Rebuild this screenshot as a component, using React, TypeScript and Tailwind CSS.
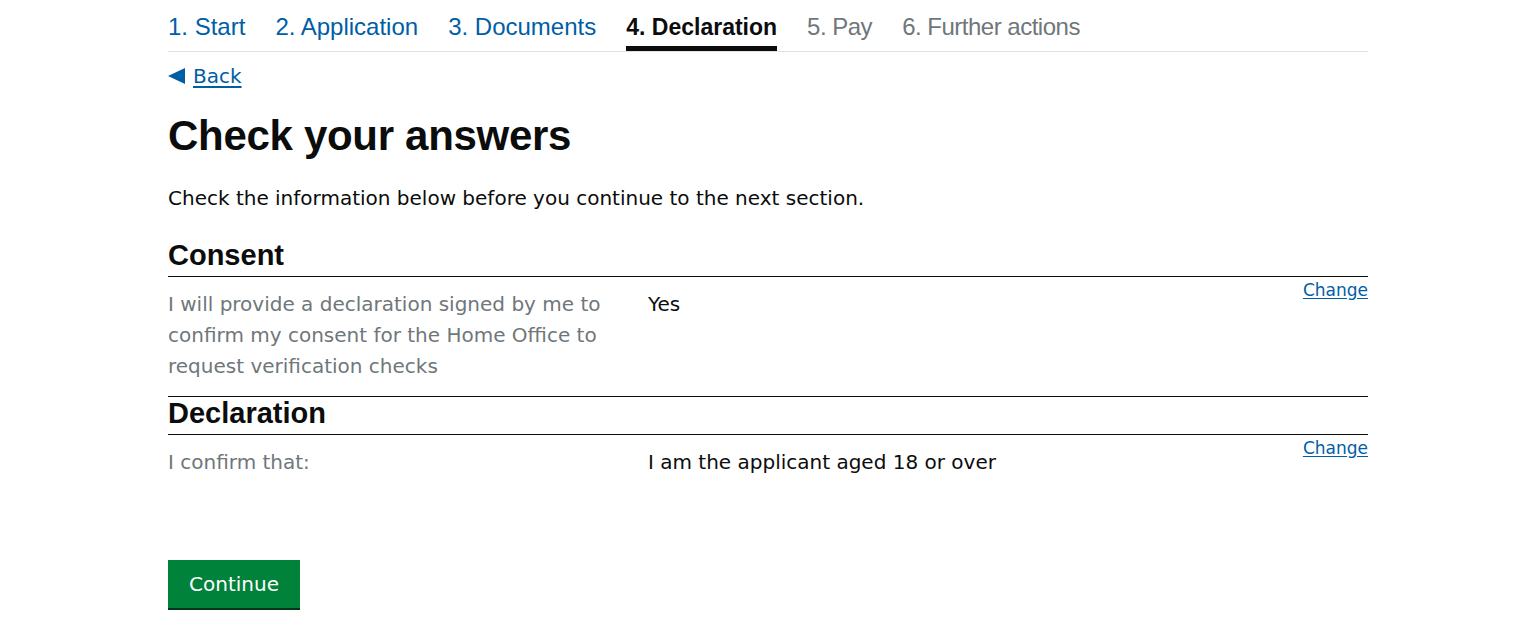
const steps = [
  { label: "1. Start", state: "done" },
  { label: "2. Application", state: "done" },
  { label: "3. Documents", state: "done" },
  { label: "4. Declaration", state: "active" },
  { label: "5. Pay", state: "todo" },
  { label: "6. Further actions", state: "todo" },
];

const sections = [
  {
    title: "Consent",
    rows: [
      {
        key: "I will provide a declaration signed by me to confirm my consent for the Home Office to request verification checks",
        value: "Yes",
      },
    ],
  },
  {
    title: "Declaration",
    rows: [{ key: "I confirm that:", value: "I am the applicant aged 18 or over" }],
  },
];

const body = { fontFamily: "'DejaVu Sans', 'Liberation Sans', sans-serif" };

export default function App() {
  return (
    <div className="min-h-screen bg-white text-[#0b0c0c]" style={{ fontFamily: "'Liberation Sans', Arial, sans-serif" }}>
      <div className="w-[1200px] mx-auto">
        {/* Progress */}
        <ul className="flex gap-[30px] border-b border-[#dee0e2]">
          {steps.map(s => (
            <li
              key={s.label}
              className={`pt-[12px] pb-[4px] border-b-[5px] leading-[30px] ${
                s.state === "active"
                  ? "border-[#0b0c0c] font-bold text-[23px] text-[#0b0c0c]"
                  : s.state === "done"
                  ? "border-transparent text-[24px] text-[#005ea5]"
                  : "border-transparent text-[24px] tracking-[-0.5px] text-[#6f777b]"
              }`}
            >
              {s.label}
            </li>
          ))}
        </ul>

        {/* Back */}
        <a href="#" className="mt-[12px] inline-flex items-center gap-[7px] text-[20px] leading-[25px] text-[#005ea5]" style={body}>
          <svg width="18" height="16" viewBox="0 0 18 16" className="mb-[1px]">
            <path d="M0 8 L17 0 L17 16 Z" fill="#005ea5" />
          </svg>
          <span className="underline underline-offset-[3px]">Back</span>
        </a>

        <h1 className="mt-[20px] text-[42px] leading-[50px] font-bold tracking-[-0.3px]">Check your answers</h1>

        <p className="mt-[23px] text-[20px] leading-[28px]" style={body}>
          Check the information below before you continue to the next section.
        </p>

        <div className="mt-[27px]">
          {sections.map((sec, si) => (
            <div key={sec.title} className={si > 0 ? "border-t border-[#0b0c0c]" : ""}>
              <h2 className="text-[29px] leading-[32px] font-bold pb-[5px] border-b border-[#0b0c0c]">{sec.title}</h2>
              {sec.rows.map(r => (
                <div key={r.key} className="flex pb-[14px]" style={body}>
                  <div className="w-[480px] pr-[20px] pt-[12px] text-[20px] leading-[31px] text-[#6f777b]">{r.key}</div>
                  <div className="flex-1 pt-[12px] text-[20px] leading-[31px]">{r.value}</div>
                  <a href="#" className="mt-[3px] text-[17px] leading-[20px] text-[#005ea5] underline underline-offset-[2px]">
                    Change
                  </a>
                </div>
              ))}
            </div>
          ))}
        </div>

        <button
          className="mt-[68px] h-[48px] px-[21px] bg-[#00823b] text-white text-[20px] leading-[25px] shadow-[0_2px_0_#003618]"
          style={body}
        >
          Continue
        </button>
      </div>
    </div>
  );
}
